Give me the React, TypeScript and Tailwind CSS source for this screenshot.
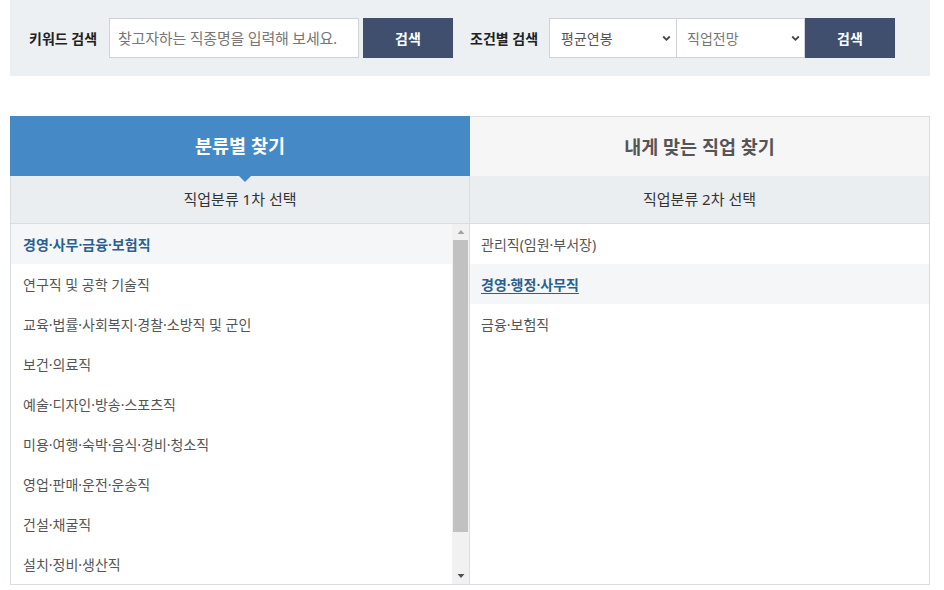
import React from "react";

const font = { fontFamily: '"Noto Sans", "Noto Sans CJK KR", sans-serif' };

const left = [
  "경영·사무·금융·보험직",
  "연구직 및 공학 기술직",
  "교육·법률·사회복지·경찰·소방직 및 군인",
  "보건·의료직",
  "예술·디자인·방송·스포츠직",
  "미용·여행·숙박·음식·경비·청소직",
  "영업·판매·운전·운송직",
  "건설·채굴직",
  "설치·정비·생산직",
];

const right = ["관리직(임원·부서장)", "경영·행정·사무직", "금융·보험직"];

function Chevron() {
  return (
    <svg width="9" height="8" viewBox="0 0 9 8" className="shrink-0">
      <path d="M1.2 2.5 L4.5 5.8 L7.8 2.5" fill="none" stroke="#444" strokeWidth="1.8" />
    </svg>
  );
}

export default function App() {
  return (
    <div className="w-[944px] h-[590px] bg-white overflow-hidden" style={font}>
      <div className="ml-[10px] w-[920px]">
        {/* search bar */}
        <div className="h-[76px] bg-[#edf0f3] flex items-center pl-[19px]">
          <div className="w-[80px] text-[14px] font-bold text-[#222]">키워드 검색</div>
          <div className="w-[250px] h-[40px] bg-white border border-[#cfd3d8] flex items-center pl-[8px] text-[15px] text-[#777] tracking-[-0.2px]">
            찾고자하는 직종명을 입력해 보세요.
          </div>
          <div className="ml-[4px] w-[90px] h-[40px] bg-[#3f4f6d] text-white text-[14px] font-bold flex items-center justify-center">
            검색
          </div>
          <div className="ml-[17px] w-[79px] text-[14px] font-bold text-[#222]">조건별 검색</div>
          <div className="w-[128px] h-[40px] bg-white border border-[#cfd3d8] flex items-center justify-between pl-[11px] pr-[5px] text-[14px] text-[#555]">
            <span>평균연봉</span>
            <Chevron />
          </div>
          <div className="w-[128px] h-[40px] bg-white border border-l-0 border-[#cfd3d8] flex items-center justify-between pl-[10px] pr-[4px] text-[14px] text-[#777]">
            <span>직업전망</span>
            <Chevron />
          </div>
          <div className="w-[90px] h-[40px] bg-[#3f4f6d] text-white text-[14px] font-bold flex items-center justify-center">
            검색
          </div>
        </div>

        {/* tabs */}
        <div className="mt-[40px] flex h-[60px]">
          <div className="relative w-[460px] bg-[#4589c6] text-white text-[18.5px] font-bold flex items-center justify-center">
            분류별 찾기
            <div className="absolute left-[229px] -bottom-[6px] w-0 h-0 border-l-[6px] border-r-[6px] border-t-[6px] border-l-transparent border-r-transparent border-t-[#4589c6]" />
          </div>
          <div className="w-[460px] bg-[#f6f6f6] border-t border-r border-[#dadde1] text-[#555] text-[18.5px] font-bold flex items-center justify-center">
            내게 맞는 직업 찾기
          </div>
        </div>

        {/* panels */}
        <div className="flex border-l border-r border-b border-[#d9dde2]">
          <div className="w-[459px] border-r border-[#d9dde2]">
            <div className="h-[48px] bg-[#ebeef1] border-b border-[#d9dde2] flex items-center justify-center text-[15px] text-[#333]">
              직업분류 1차 선택
            </div>
            <div className="flex h-[360px]">
              <div className="flex-1">
                {left.map((t, i) => (
                  <div
                    key={t}
                    className={
                      "h-[40px] flex items-center pl-[12px] text-[14px] " +
                      (i === 0 ? "bg-[#f5f6f8] text-[#2c5f8f] font-semibold" : "text-[#555]")
                    }
                  >
                    {t}
                  </div>
                ))}
              </div>
              <div className="w-[17px] bg-[#f1f1f1] flex flex-col">
                <div className="h-[16px] flex items-center justify-center">
                  <svg width="8" height="6" viewBox="0 0 8 6">
                    <path d="M0.5 5 L4 1 L7.5 5 Z" fill="#a3a3a3" />
                  </svg>
                </div>
                <div className="mx-[1px] h-[292px] bg-[#c1c1c1]" />
                <div className="flex-1" />
                <div className="h-[16px] flex items-center justify-center">
                  <svg width="8" height="6" viewBox="0 0 8 6">
                    <path d="M0.5 1 L4 5 L7.5 1 Z" fill="#505050" />
                  </svg>
                </div>
              </div>
            </div>
          </div>
          <div className="flex-1">
            <div className="h-[48px] bg-[#ebeef1] border-b border-[#d9dde2] flex items-center justify-center text-[15px] text-[#333]">
              직업분류 2차 선택
            </div>
            <div className="h-[360px]">
              {right.map((t, i) => (
                <div
                  key={t}
                  className={
                    "h-[40px] flex items-center pl-[11px] text-[14px] " +
                    (i === 1 ? "bg-[#f5f6f8] text-[#2c5f8f] font-semibold underline underline-offset-[3px]" : "text-[#555]")
                  }
                >
                  {t}
                </div>
              ))}
            </div>
          </div>
        </div>
      </div>
    </div>
  );
}
